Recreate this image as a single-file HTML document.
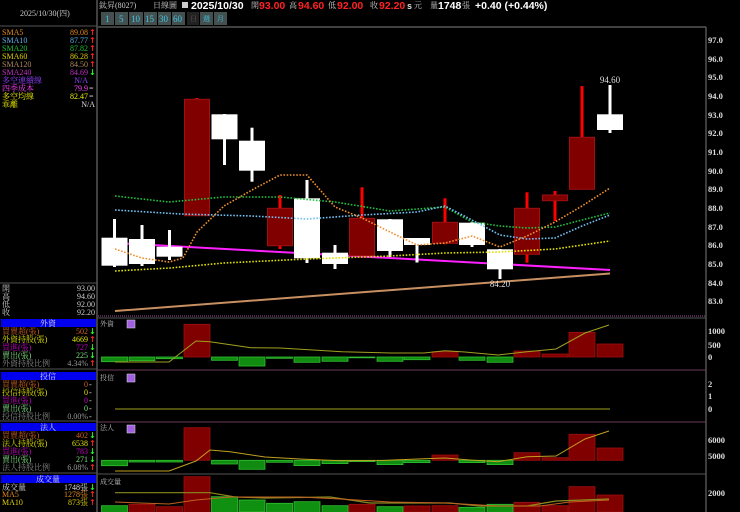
<!DOCTYPE html>
<html><head><meta charset="utf-8"><style>
html,body{margin:0;padding:0;background:#000;width:740px;height:512px;overflow:hidden}
svg{display:block}
text{font-family:"Liberation Serif","Noto Serif CJK SC","Noto Sans CJK TC",serif;font-size:8px}
.b{font-family:"Liberation Sans","Noto Sans CJK TC",sans-serif;font-weight:bold;font-size:10.5px}
.ax{font-family:"Liberation Serif",serif;font-size:8.5px;fill:#ddd;font-weight:bold}
.ar{font-family:"DejaVu Sans",sans-serif;font-size:8px;font-weight:bold}
</style></head><body>
<svg width="740" height="512" viewBox="0 0 740 512" xmlns="http://www.w3.org/2000/svg">
<rect width="740" height="512" fill="#000"/>
<line x1="97" y1="0" x2="97" y2="512" stroke="#555" stroke-width="1.5"/>
<line x1="0" y1="26" x2="97" y2="26" stroke="#555"/>
<line x1="98" y1="27" x2="706" y2="27" stroke="#666" stroke-width="1.2"/>
<line x1="706" y1="27" x2="706" y2="512" stroke="#666" stroke-width="1.2"/>
<line x1="0" y1="283" x2="97" y2="283" stroke="#555"/>
<line x1="98" y1="316" x2="706" y2="316" stroke="#a050a0" stroke-dasharray="1 1"/>
<line x1="98" y1="318" x2="706" y2="318" stroke="#555"/>
<line x1="98" y1="370" x2="706" y2="370" stroke="#6a3a5a"/>
<line x1="98" y1="422" x2="706" y2="422" stroke="#6a3a5a"/>
<line x1="98" y1="474" x2="706" y2="474" stroke="#555"/>
<line x1="0" y1="369" x2="97" y2="369" stroke="#555"/>
<line x1="0" y1="421" x2="97" y2="421" stroke="#555"/>
<line x1="0" y1="473" x2="97" y2="473" stroke="#555"/>

<text x="20" y="16" fill="#ccc">2025/10/30(四)</text>
<text x="99" y="8" fill="#ccc">鈦昇(8027)</text>
<text x="153" y="8" fill="#ccc">日線圖</text>
<rect x="182" y="2" width="6" height="6" fill="#ccc"/>
<text class="b" x="191" y="9" fill="#fff">2025/10/30</text>
<text x="251" y="8" fill="#ccc">開</text><text class="b" x="259" y="9" fill="#f22">93.00</text>
<text x="289" y="8" fill="#ccc">高</text><text class="b" x="298" y="9" fill="#f22">94.60</text>
<text x="328" y="8" fill="#ccc">低</text><text class="b" x="337" y="9" fill="#f22">92.00</text>
<text x="370" y="8" fill="#ccc">收</text><text class="b" x="379" y="9" fill="#f22">92.20</text>
<text class="b" x="407" y="9" fill="#ddd" style="font-size:9px">s</text><text x="414" y="8" fill="#ccc">元</text>
<text x="430" y="8" fill="#ccc">量</text><text class="b" x="438" y="9" fill="#fff">1748</text><text x="462" y="8" fill="#ccc">張</text>
<text class="b" x="475" y="9" fill="#fff">+0.40 (+0.44%)</text>
<g>
<rect x="101" y="12" width="13" height="13" fill="#44504f"/><text x="105" y="22" fill="#40c8e8" style="font-size:9px">1</text>
<rect x="115" y="12" width="13" height="13" fill="#44504f"/><text x="119" y="22" fill="#40c8e8" style="font-size:9px">5</text>
<rect x="129" y="12" width="14" height="13" fill="#44504f"/><text x="131" y="22" fill="#40c8e8" style="font-size:9px">10</text>
<rect x="144" y="12" width="13" height="13" fill="#44504f"/><text x="145" y="22" fill="#40c8e8" style="font-size:9px">15</text>
<rect x="158" y="12" width="13" height="13" fill="#44504f"/><text x="159" y="22" fill="#40c8e8" style="font-size:9px">30</text>
<rect x="172" y="12" width="13" height="13" fill="#44504f"/><text x="173" y="22" fill="#40c8e8" style="font-size:9px">60</text>
<rect x="187" y="12" width="12" height="13" fill="#222"/><text x="190" y="21" fill="#555" style="font-size:7px">日</text>
<rect x="200" y="12" width="13" height="13" fill="#44504f"/><text x="203" y="21" fill="#40c8e8" style="font-size:7px">週</text>
<rect x="214" y="12" width="13" height="13" fill="#44504f"/><text x="217" y="21" fill="#40c8e8" style="font-size:7px">月</text>
</g>

<g>
<text x="2" y="35" fill="#e08a20">SMA5</text><text x="88" y="35" fill="#e08a20" text-anchor="end">89.08</text><text class="ar" x="89" y="35" fill="#f22">↑</text>
<text x="2" y="43" fill="#60b0e8">SMA10</text><text x="88" y="43" fill="#60b0e8" text-anchor="end">87.77</text><text class="ar" x="89" y="43" fill="#f22">↑</text>
<text x="2" y="51" fill="#20c030">SMA20</text><text x="88" y="51" fill="#20c030" text-anchor="end">87.82</text><text class="ar" x="89" y="51" fill="#f22">↑</text>
<text x="2" y="59" fill="#e0d000">SMA60</text><text x="88" y="59" fill="#e0d000" text-anchor="end">86.28</text><text class="ar" x="89" y="59" fill="#f22">↑</text>
<text x="2" y="67" fill="#b08860">SMA120</text><text x="88" y="67" fill="#b08860" text-anchor="end">84.50</text><text class="ar" x="89" y="67" fill="#f22">↑</text>
<text x="2" y="75" fill="#c030c0">SMA240</text><text x="88" y="75" fill="#c030c0" text-anchor="end">84.69</text><text class="ar" x="89" y="75" fill="#2f2">↓</text>
<text x="2" y="83" fill="#9040ff">多空連續線</text><text x="88" y="83" fill="#9040ff" text-anchor="end">N/A</text>
<text x="2" y="91" fill="#ff40ff">四季成本</text><text x="88" y="91" fill="#ff40ff" text-anchor="end">79.9</text><text x="89" y="91" fill="#ddd">=</text>
<text x="2" y="99" fill="#f0f000">多空均線</text><text x="88" y="99" fill="#f0f000" text-anchor="end">82.47</text><text x="89" y="99" fill="#ddd">=</text>
<text x="2" y="107" fill="#f0f000">乖離</text><text x="95" y="107" fill="#ddd" text-anchor="end">N/A</text>
</g>
<text x="2" y="291" fill="#ccc">開</text><text x="95" y="291" fill="#ccc" text-anchor="end">93.00</text>
<text x="2" y="299" fill="#ccc">高</text><text x="95" y="299" fill="#ccc" text-anchor="end">94.60</text>
<text x="2" y="307" fill="#ccc">低</text><text x="95" y="307" fill="#ccc" text-anchor="end">92.00</text>
<text x="2" y="315" fill="#ccc">收</text><text x="95" y="315" fill="#ccc" text-anchor="end">92.20</text>

<rect x="1" y="319" width="95" height="8" fill="#0000ee"/><text x="48" y="326" fill="#ddd" text-anchor="middle">外資</text>
<text x="2" y="334" fill="#d06020">買賣超(張)</text><text x="88" y="334" fill="#d06020" text-anchor="end">502</text><text class="ar" x="89" y="334" fill="#2f2">↓</text>
<text x="2" y="342" fill="#e0e000">外資持股(張)</text><text x="88" y="342" fill="#e0e000" text-anchor="end">4669</text><text class="ar" x="89" y="342" fill="#f22">↑</text>
<text x="2" y="350" fill="#c000c0">買進(張)</text><text x="88" y="350" fill="#c000c0" text-anchor="end">727</text><text class="ar" x="89" y="350" fill="#2f2">↓</text>
<text x="2" y="358" fill="#80e080">賣出(張)</text><text x="88" y="358" fill="#80e080" text-anchor="end">225</text><text class="ar" x="89" y="358" fill="#2f2">↓</text>
<text x="2" y="366" fill="#888">外資持股比例</text><text x="88" y="366" fill="#999" text-anchor="end">4.34%</text><text class="ar" x="89" y="366" fill="#f22">↑</text>
<rect x="1" y="372" width="95" height="8" fill="#0000ee"/><text x="48" y="379" fill="#ddd" text-anchor="middle">投信</text>
<text x="2" y="387" fill="#d06020">買賣超(張)</text><text x="88" y="387" fill="#d06020" text-anchor="end">0</text><text x="89" y="387" fill="#ddd">-</text>
<text x="2" y="395" fill="#e0e000">投信持股(張)</text><text x="88" y="395" fill="#e0e000" text-anchor="end">0</text><text x="89" y="395" fill="#ddd">-</text>
<text x="2" y="403" fill="#c000c0">買進(張)</text><text x="88" y="403" fill="#c000c0" text-anchor="end">0</text><text x="89" y="403" fill="#ddd">-</text>
<text x="2" y="411" fill="#80e080">賣出(張)</text><text x="88" y="411" fill="#80e080" text-anchor="end">0</text><text x="89" y="411" fill="#ddd">-</text>
<text x="2" y="419" fill="#888">投信持股比例</text><text x="88" y="419" fill="#999" text-anchor="end">0.00%</text><text x="89" y="419" fill="#ddd">-</text>
<rect x="1" y="423" width="95" height="8" fill="#0000ee"/><text x="48" y="430" fill="#ddd" text-anchor="middle">法人</text>
<text x="2" y="438" fill="#d06020">買賣超(張)</text><text x="88" y="438" fill="#d06020" text-anchor="end">402</text><text class="ar" x="89" y="438" fill="#2f2">↓</text>
<text x="2" y="446" fill="#e0e000">法人持股(張)</text><text x="88" y="446" fill="#e0e000" text-anchor="end">6538</text><text class="ar" x="89" y="446" fill="#f22">↑</text>
<text x="2" y="454" fill="#c000c0">買進(張)</text><text x="88" y="454" fill="#c000c0" text-anchor="end">783</text><text class="ar" x="89" y="454" fill="#2f2">↓</text>
<text x="2" y="462" fill="#80e080">賣出(張)</text><text x="88" y="462" fill="#80e080" text-anchor="end">271</text><text class="ar" x="89" y="462" fill="#2f2">↓</text>
<text x="2" y="470" fill="#888">法人持股比例</text><text x="88" y="470" fill="#999" text-anchor="end">6.08%</text><text class="ar" x="89" y="470" fill="#f22">↑</text>
<rect x="1" y="475" width="95" height="8" fill="#0000ee"/><text x="48" y="482" fill="#ddd" text-anchor="middle">成交量</text>
<text x="2" y="490" fill="#ddd">成交量</text><text x="88" y="490" fill="#ddd" text-anchor="end">1748張</text><text class="ar" x="89" y="490" fill="#2f2">↓</text>
<text x="2" y="497" fill="#e08a20">MA5</text><text x="88" y="497" fill="#e08a20" text-anchor="end">1278張</text><text class="ar" x="89" y="497" fill="#f22">↑</text>
<text x="2" y="505" fill="#e0d000">MA10</text><text x="88" y="505" fill="#e0d000" text-anchor="end">873張</text><text class="ar" x="89" y="505" fill="#f22">↑</text>

<g>
<text class="ax" x="708" y="43">97.0</text><text class="ax" x="708" y="62">96.0</text><text class="ax" x="708" y="80">95.0</text>
<text class="ax" x="708" y="99">94.0</text><text class="ax" x="708" y="118">93.0</text><text class="ax" x="708" y="136">92.0</text>
<text class="ax" x="708" y="155">91.0</text><text class="ax" x="708" y="174">90.0</text><text class="ax" x="708" y="192">89.0</text>
<text class="ax" x="708" y="211">88.0</text><text class="ax" x="708" y="230">87.0</text><text class="ax" x="708" y="248">86.0</text>
<text class="ax" x="708" y="267">85.0</text><text class="ax" x="708" y="286">84.0</text><text class="ax" x="708" y="304">83.0</text>
<text class="ax" x="708" y="334">1000</text><text class="ax" x="708" y="348">500</text><text class="ax" x="708" y="360">0</text>
<text class="ax" x="708" y="387">2</text><text class="ax" x="708" y="399">1</text><text class="ax" x="708" y="412">0</text>
<text class="ax" x="708" y="443">6000</text><text class="ax" x="708" y="459">5000</text>
<text class="ax" x="708" y="496">2000</text>
</g>

<line x1="115" y1="311" x2="610" y2="273.5" stroke="#c89060" stroke-width="2"/>
<line x1="115" y1="243" x2="610" y2="270" stroke="#ff20ff" stroke-width="2"/>

<g fill="#fff">
<rect x="113" y="219" width="3" height="48"/><rect x="101.5" y="237.7" width="26" height="28"/>
<rect x="140.5" y="225" width="3" height="41"/><rect x="129" y="239" width="26" height="25"/>
<rect x="168" y="230" width="3" height="30"/><rect x="156.5" y="246.7" width="26" height="10"/>
<rect x="223" y="114" width="3" height="51"/><rect x="211.5" y="114.3" width="26" height="25"/>
<rect x="250.5" y="127.7" width="3" height="54"/><rect x="239" y="140.7" width="26" height="30"/>
<rect x="305.5" y="180" width="3" height="83"/><rect x="294" y="198.3" width="26" height="60"/>
<rect x="333.5" y="245" width="3" height="24"/><rect x="322" y="252.7" width="26" height="11.3"/>
<rect x="388.5" y="219" width="3" height="38"/><rect x="377" y="219.3" width="26" height="31.7"/>
<rect x="415.5" y="238" width="3" height="24.5"/><rect x="404" y="238" width="26" height="7"/>
<rect x="470.5" y="222" width="3" height="25"/><rect x="459" y="222.7" width="26" height="22.3"/>
<rect x="498.5" y="249" width="3" height="30"/><rect x="487" y="249.3" width="26" height="20"/>
<rect x="608.5" y="85" width="3" height="48"/><rect x="597" y="114.3" width="26" height="15.7"/>
</g>
<g fill="#ff0000">
<rect x="195.5" y="98" width="3" height="3"/>
<rect x="278.5" y="195" width="3" height="54"/>
<rect x="360.5" y="187.3" width="3" height="69"/>
<rect x="443.5" y="198.3" width="3" height="46"/>
<rect x="525.5" y="192.3" width="3" height="70.4"/>
<rect x="553.5" y="191" width="3" height="30"/>
<rect x="580.5" y="86" width="3" height="52"/>
</g>
<g fill="#800000" stroke="#a01010" stroke-width="1">
<rect x="184.5" y="99.3" width="25" height="116.4"/>
<rect x="267.5" y="208.3" width="25" height="37.4"/>
<rect x="349.5" y="218.3" width="25" height="37.4"/>
<rect x="432.5" y="222.3" width="25" height="21"/>
<rect x="514.5" y="208.3" width="25" height="46"/>
<rect x="542.5" y="195" width="25" height="5.7"/>
<rect x="569.5" y="137.3" width="25" height="52"/>
</g>
<text x="610" y="83" fill="#ddd" text-anchor="middle" style="font-size:9px">94.60</text>
<text x="500" y="287" fill="#ddd" text-anchor="middle" style="font-size:9px">84.20</text>

<g fill="none" stroke-width="1.6" stroke-dasharray="1.6 1.6" stroke-linejoin="round">
<polyline stroke="#e0e000" points="115,271 170,268 224,263 307,259 390,256 445,253 500,252 555,249 610,241"/>
<polyline stroke="#20c040" points="115,196 169,202 224,197 280,197 335,202 390,211 445,207 472,222 500,226 527,228 555,227 582,220 610,213"/>
<polyline stroke="#70c0f0" points="115,210 180,214 252,216 307,219 362,215 417,212 445,206 472,220 500,235 527,239 555,238 582,226 610,215"/>
<polyline stroke="#f09030" points="115,249 142,258 169,262 183,258 197,232 224,206 252,190 280,175 307,175 335,207 362,218 390,232 417,245 445,243 472,236 500,247 527,236 555,222 582,206 610,188"/>
</g>

<text x="100" y="326" fill="#bbb" style="font-size:7px">外資</text><rect x="127" y="320" width="8" height="8" fill="#a060e0" stroke="#ddd" stroke-width=".5"/>
<text x="100" y="380" fill="#bbb" style="font-size:7px">投信</text><rect x="127" y="374" width="8" height="8" fill="#a060e0" stroke="#ddd" stroke-width=".5"/>
<text x="100" y="430" fill="#bbb" style="font-size:7px">法人</text><rect x="127" y="425" width="8" height="8" fill="#a060e0" stroke="#ddd" stroke-width=".5"/>
<text x="100" y="484" fill="#bbb" style="font-size:7px">成交量</text>

<g stroke-width=".8">
<g fill="#108a10" stroke="#30c030">
<rect x="101.5" y="357" width="26" height="4.7"/><rect x="129" y="357" width="26" height="3.7"/><rect x="156.5" y="357" width="26" height="1.7"/>
<rect x="211.5" y="357" width="26" height="3.3"/><rect x="239" y="357" width="26" height="9"/><rect x="266.5" y="357" width="26" height="1.3"/>
<rect x="294" y="357" width="26" height="5.3"/><rect x="322" y="357" width="26" height="4.3"/><rect x="349" y="357" width="26" height=".8"/>
<rect x="377" y="357" width="26" height="4.3"/><rect x="404" y="357" width="26" height="2.7"/>
<rect x="459" y="357" width="26" height="3.3"/><rect x="487" y="357" width="26" height="5.3"/>
</g>
<g fill="#800000" stroke="#a01010">
<rect x="184" y="324.3" width="26" height="32.7"/><rect x="432" y="351.7" width="26" height="5.3"/>
<rect x="514" y="351" width="26" height="6"/><rect x="542" y="354" width="26" height="3"/>
<rect x="569" y="332.3" width="26" height="24.7"/><rect x="597" y="344" width="26" height="13"/>
</g>
</g>
<polyline fill="none" stroke="#a0a020" stroke-width="1" points="115,362 169,362 196,341 210,341.7 251,347.7 280,348 313,350 342,351.7 391,353 424,353 445,350.7 465,352 498,355 527,351.7 556,349 585,333 609,325"/>

<line x1="115" y1="409" x2="610" y2="409" stroke="#a0a020"/>

<g stroke-width=".8">
<g fill="#108a10" stroke="#30c030">
<rect x="101.5" y="460.3" width="26" height="5.4"/><rect x="129" y="460.3" width="26" height="1.7"/><rect x="156.5" y="460.3" width="26" height="1.7"/>
<rect x="211.5" y="460.3" width="26" height="3.7"/><rect x="239" y="460.3" width="26" height="9"/><rect x="266.5" y="460.3" width="26" height="2"/>
<rect x="294" y="460.3" width="26" height="5.3"/><rect x="322" y="460.3" width="26" height="3.3"/><rect x="349" y="460.3" width="26" height="1.3"/>
<rect x="377" y="460.3" width="26" height="4.3"/><rect x="404" y="460.3" width="26" height="2.3"/>
<rect x="459" y="460.3" width="26" height="2.3"/><rect x="487" y="460.3" width="26" height="4.3"/>
</g>
<g fill="#800000" stroke="#a01010">
<rect x="184" y="427.7" width="26" height="32.6"/><rect x="432" y="455" width="26" height="5.3"/>
<rect x="514" y="452.7" width="26" height="7.6"/><rect x="542" y="457.7" width="26" height="2.6"/>
<rect x="569" y="434.3" width="26" height="26"/><rect x="597" y="448" width="26" height="12.3"/>
</g>
</g>
<polyline fill="none" stroke="#c0a020" stroke-width="1" points="115,471 169,471 196,461 210,450 230,451.7 265,457 300,459 340,460.7 380,460.5 424,458.7 445,458 470,460 498,461.7 527,456.7 556,456 585,439 609,431"/>

<g stroke-width=".8">
<g fill="#109010" stroke="#30c030">
<rect x="101.5" y="505.7" width="26" height="7"/><rect x="211.5" y="496.7" width="26" height="16"/><rect x="239" y="500" width="26" height="12"/>
<rect x="266.5" y="503.3" width="26" height="9"/><rect x="294" y="501.7" width="26" height="11"/><rect x="322" y="505.7" width="26" height="7"/>
<rect x="377" y="506.7" width="26" height="6"/><rect x="459" y="507.3" width="26" height="5"/><rect x="487" y="504.3" width="26" height="8"/>
</g>
<g fill="#800000" stroke="#a01010">
<rect x="129" y="504.3" width="26" height="8"/><rect x="156.5" y="506.7" width="26" height="6"/><rect x="184" y="476.7" width="26" height="36"/>
<rect x="349" y="504.3" width="26" height="8"/><rect x="404" y="506" width="26" height="6"/><rect x="432" y="505.7" width="26" height="7"/>
<rect x="514" y="502.3" width="26" height="10"/><rect x="542" y="505.7" width="26" height="7"/>
<rect x="569" y="486.7" width="26" height="26"/><rect x="597" y="495" width="26" height="17"/>
</g>
</g>
<polyline fill="none" stroke="#8a8a20" stroke-width="1.2" points="115,492.7 210,492.7 235,497 265,498 330,497 370,503 420,503 450,503 480,506 527,506 556,501 609,499"/>
<polyline fill="none" stroke="#c06020" stroke-width="1" points="115,502 169,504 196,500 230,497 300,497 340,499 390,502 445,503 498,506 540,506 570,502 609,500"/>
</svg>
</body></html>
